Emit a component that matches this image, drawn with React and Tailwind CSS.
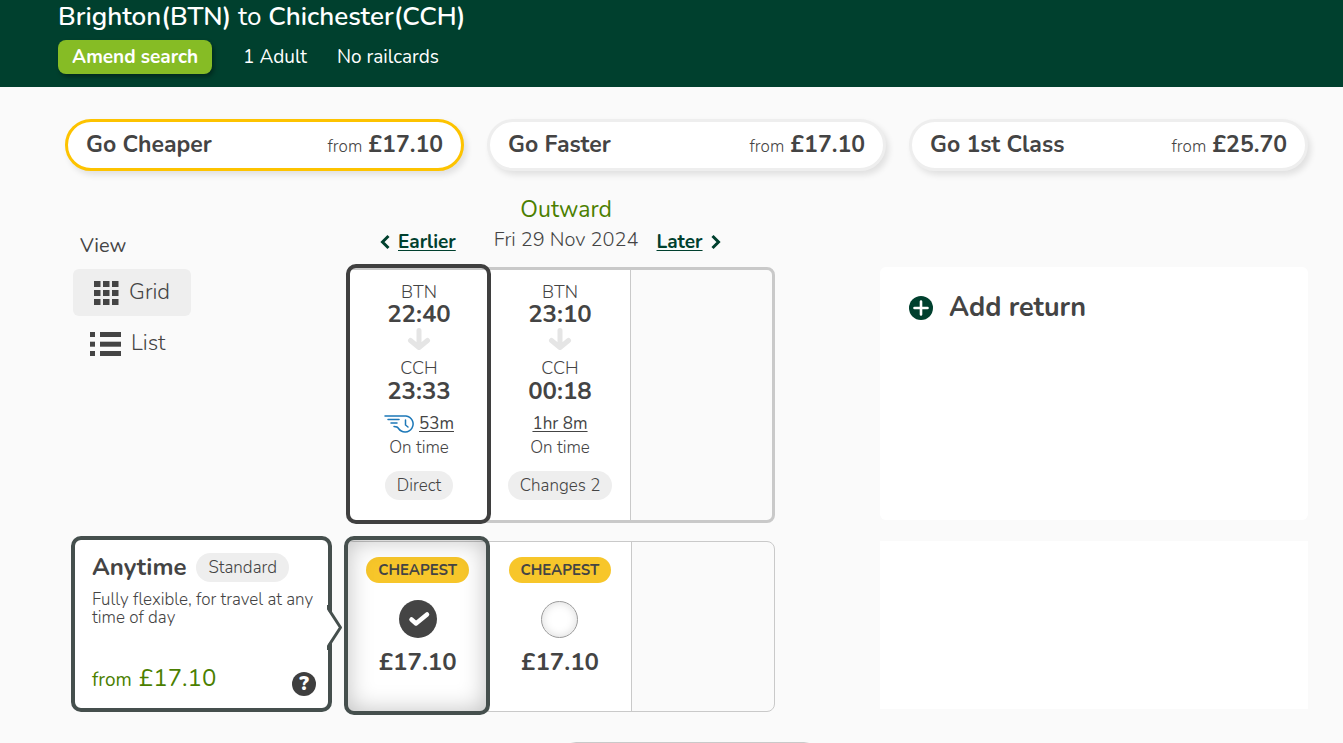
import React, { useState } from "react";

const offers = [
  { id: "cheaper", name: "Go Cheaper", price: "£17.10" },
  { id: "faster", name: "Go Faster", price: "£17.10" },
  { id: "first", name: "Go 1st Class", price: "£25.70" },
];

const journeys = [
  {
    id: "2240",
    departs: "22:40",
    arrives: "23:33",
    duration: "53m",
    fastest: true,
    changes: "Direct",
    price: "£17.10",
  },
  {
    id: "2310",
    departs: "23:10",
    arrives: "00:18",
    duration: "1hr 8m",
    fastest: false,
    changes: "Changes 2",
    price: "£17.10",
  },
];

const GridIcon = () => (
  <svg width="25" height="24" viewBox="0 0 25 24" fill="currentColor" aria-hidden="true">
    {[0, 9, 18].map((y) =>
      [0, 9, 18].map((x) => <rect key={`${x}-${y}`} x={x} y={y} width="6.5" height="6" />)
    )}
  </svg>
);

const ListIcon = () => (
  <svg width="31" height="24" viewBox="0 0 31 24" fill="currentColor" aria-hidden="true">
    {[0, 9.7, 19].map((y) => (
      <g key={y}>
        <rect x="0" y={y} width="5" height="5" />
        <rect x="10" y={y} width="21" height="5" />
      </g>
    ))}
  </svg>
);

const Chevron = ({ d }) => (
  <svg width="10" height="16" viewBox="0 0 10 16" fill="none" stroke="currentColor" strokeWidth="3" aria-hidden="true">
    <path d={d} />
  </svg>
);

const DownArrow = () => (
  <svg
    width="24"
    height="24"
    viewBox="0 0 24 24"
    fill="none"
    stroke="#e5e5e5"
    strokeWidth="5"
    strokeLinecap="round"
    strokeLinejoin="round"
    aria-hidden="true"
  >
    <path d="M12 3.5V20M3.5 13.5L12 20.5L20.5 13.5" />
  </svg>
);

const FastIcon = () => (
  <svg
    width="31"
    height="18"
    viewBox="0 0 31 18"
    fill="none"
    stroke="#1d78b8"
    strokeWidth="1.5"
    strokeLinecap="round"
    aria-hidden="true"
  >
    <path d="M1 1H22A8 8 0 1 1 14.5 13.5Q13.5 11.5 10 11.5" />
    <path d="M4 4.5H15M7 8H13" />
    <path d="M21.5 5V10L24 12" />
  </svg>
);

// thick frame drawn over the column that is currently picked
const SelectedFrame = ({ className }) => (
  <span
    className={`pointer-events-none absolute -top-1.5 -right-0.5 -bottom-1 -left-[3px] z-10 rounded-[10px] border-4 ${className}`}
  />
);

const JourneyCell = ({ journey, selected }) => (
  <div className="relative flex flex-col items-center border-r border-[#c9c9c9] bg-white pt-[11px] pb-5">
    <span className="text-lg leading-[22px] font-light">BTN</span>
    <span className="text-2xl leading-[22px] font-bold">{journey.departs}</span>
    <span className="mt-0.5">
      <DownArrow />
    </span>
    <span className="mt-1.5 text-lg leading-[22px] font-light">CCH</span>
    <span className="text-2xl leading-6 font-bold">{journey.arrives}</span>
    <div className="mt-[9px] flex h-6 items-center gap-1">
      {journey.fastest && <FastIcon />}
      <button type="button" className="text-[17px] leading-6 underline underline-offset-2">
        {journey.duration}
      </button>
    </div>
    <span className="text-[17px] leading-6 font-light">On time</span>
    <span className="mt-[11px] rounded-full bg-[#eee] px-3 text-[17px] leading-[29px] font-light">
      {journey.changes}
    </span>
    {selected && <SelectedFrame className="border-[#3f3f3f]" />}
  </div>
);

const FareCell = ({ journey, selected, onSelect }) => (
  <label className="relative flex cursor-pointer flex-col items-center border-r border-[#c9c9c9] bg-white pt-[15px] pb-[33px]">
    <span className="rounded-full bg-[#f7c62a] px-3 text-[15px] leading-[26px] font-bold">
      CHEAPEST
    </span>
    <span className="relative mt-[17px] flex h-[38px] w-[38px] items-center justify-center">
      <input
        type="radio"
        name="fare"
        checked={selected}
        onChange={onSelect}
        className="h-[37px] w-[37px] appearance-none rounded-full border border-[#999] bg-white shadow-[inset_0_0_10px_rgba(0,0,0,0.15)] checked:h-[38px] checked:w-[38px] checked:border-0 checked:bg-[#444] checked:shadow-none"
      />
      {selected && (
        <svg
          className="pointer-events-none absolute"
          width="38"
          height="38"
          viewBox="0 0 38 38"
          fill="none"
          stroke="#fff"
          strokeWidth="4.5"
          strokeLinecap="round"
          strokeLinejoin="round"
          aria-hidden="true"
        >
          <path d="M12.5 19.5L17 23.5L28 14.5" />
        </svg>
      )}
    </span>
    <span className="mt-2.5 text-2xl leading-7 font-bold">{journey.price}</span>
    {selected && (
      <SelectedFrame className="border-[#454f4d] shadow-[inset_0_0_24px_rgba(0,0,0,0.25)]" />
    )}
  </label>
);

const App = () => {
  const [offer, setOffer] = useState("cheaper");
  const [view, setView] = useState("grid");
  const [picked, setPicked] = useState("2240");

  return (
    <div className="min-h-screen bg-[#fafafa] font-['Nunito','Lato',sans-serif] text-[#444]">
      {/* Search summary */}
      <header className="bg-[#00402e] px-[58px] pb-[13px] text-white">
        <h1 className="text-[26px] leading-[34px]">
          <b className="font-semibold">Brighton(BTN)</b> to{" "}
          <b className="font-semibold">Chichester(CCH)</b>
        </h1>
        <div className="mt-1.5 flex items-center text-[19px]">
          <button
            type="button"
            className="h-[34px] rounded-lg bg-[#86bc25] px-3.5 font-bold shadow-[2px_3px_4px_rgba(0,0,0,0.35)]"
          >
            Amend search
          </button>
          <span className="ml-[31px]">1 Adult</span>
          <span className="ml-[30px]">No railcards</span>
        </div>
      </header>

      <main className="pt-8 pr-[35px]">
        {/* Offers */}
        <div className="grid grid-cols-3 gap-[23px] pl-[65px]">
          {offers.map((item) => (
            <button
              key={item.id}
              type="button"
              onClick={() => setOffer(item.id)}
              className={`flex h-[52px] items-center justify-between rounded-full border-3 bg-white px-[18px] shadow-[3px_4px_6px_rgba(0,0,0,0.1)] ${
                offer === item.id ? "border-[#fdc300]" : "border-[#eee]"
              }`}
            >
              <span className="text-[23px] font-bold">{item.name}</span>
              <span className="flex items-baseline gap-1.5">
                <span className="text-[17px] font-light">from</span>
                <b className="text-[23px]">{item.price}</b>
              </span>
            </button>
          ))}
        </div>

        {/* Timetable */}
        <div className="mt-6 grid grid-cols-[275px_429px_1fr] pl-[71px]">
          <div className="pt-[38px]">
            <h2 className="pl-[9px] text-[20px] leading-[26px]">View</h2>
            <div className="mt-2.5 ml-0.5 flex flex-col items-start gap-1 text-[22px] font-light">
              <button
                type="button"
                onClick={() => setView("grid")}
                className={`flex h-[47px] w-[118px] items-center gap-[10px] rounded-md pl-[21px] ${
                  view === "grid" ? "bg-[#eee]" : ""
                }`}
              >
                <GridIcon />
                Grid
              </button>
              <button
                type="button"
                onClick={() => setView("list")}
                className={`flex h-[47px] w-[118px] items-center gap-[10px] rounded-md pl-[17px] ${
                  view === "list" ? "bg-[#eee]" : ""
                }`}
              >
                <ListIcon />
                List
              </button>
            </div>
          </div>

          <div>
            <div className="flex items-end pl-[34px]">
              <a href="#earlier" className="flex items-center gap-2 text-[19px] leading-[26px] font-bold text-[#00402e]">
                <Chevron d="M8.5 2L2.5 8L8.5 14" />
                <span className="underline underline-offset-2">Earlier</span>
              </a>
              <div className="ml-[38px] text-center">
                <h2 className="text-[23px] leading-[30px] text-[#4b7f00]">Outward</h2>
                <p className="text-[20px] leading-[30px] font-light">Fri 29 Nov 2024</p>
              </div>
              <a href="#later" className="ml-[18px] flex items-center gap-2 text-[19px] leading-[26px] font-bold text-[#00402e]">
                <span className="underline underline-offset-2">Later</span>
                <Chevron d="M1.5 2L7.5 8L1.5 14" />
              </a>
            </div>
            <div className="mt-3 grid grid-cols-3 rounded-lg border-3 border-[#c9c9c9]">
              {journeys.map((journey) => (
                <JourneyCell key={journey.id} journey={journey} selected={picked === journey.id} />
              ))}
            </div>
          </div>

          <div className="pt-[72px] pb-[3px] pl-[105px]">
            <div className="h-full rounded-md bg-white px-[29px] pt-[23px]">
              <button type="button" className="flex items-center gap-4 text-[27px] leading-9 font-bold">
                <svg width="24" height="24" viewBox="0 0 24 24" aria-hidden="true">
                  <circle cx="12" cy="12" r="12" fill="#00402e" />
                  <path d="M12 5.5V18.5M5.5 12H18.5" stroke="#fff" strokeWidth="2.6" strokeLinecap="round" />
                </svg>
                Add return
              </button>
            </div>
          </div>
        </div>

        {/* Fares */}
        <div className="mt-[13px] grid grid-cols-[275px_429px_1fr] pl-[71px]">
          <div className="relative flex h-44 w-[261px] flex-col rounded-[10px] border-4 border-[#454f4d] bg-white pt-[13px] pr-3 pb-3.5 pl-[17px]">
            <div className="flex items-center gap-[10px]">
              <h3 className="text-2xl leading-[29px] font-bold">Anytime</h3>
              <span className="rounded-full bg-[#eee] px-3 text-[17px] leading-[29px] font-light">
                Standard
              </span>
            </div>
            <p className="mt-[9px] text-[17px] leading-[18px] font-light">
              Fully flexible, for travel at any time of day
            </p>
            <p className="mt-auto flex items-baseline gap-[7px] text-[#4b7f00]">
              <span className="text-[19px]">from</span>
              <span className="text-2xl leading-[30px]">£17.10</span>
            </p>
            <button
              type="button"
              aria-label="Fare details"
              className="absolute right-3 bottom-3 h-6 w-6 rounded-full bg-[#3f3f3f] text-xl leading-6 font-black text-white"
            >
              ?
            </button>
            <svg className="absolute top-[65px] -right-[15px]" width="19" height="45" viewBox="0 0 19 45" aria-hidden="true">
              <path d="M0 0L16.5 22.5L0 45Z" fill="#fff" />
              <path d="M4.5 0V4L16.5 22.5L4.5 41V45" fill="none" stroke="#454f4d" strokeWidth="3" strokeLinejoin="round" />
            </svg>
          </div>

          <div className="mt-[5px] grid grid-cols-3 rounded-lg border border-[#c9c9c9]">
            {journeys.map((journey) => (
              <FareCell
                key={journey.id}
                journey={journey}
                selected={picked === journey.id}
                onSelect={() => setPicked(journey.id)}
              />
            ))}
          </div>

          <div className="pt-[5px] pb-[3px] pl-[105px]">
            <div className="h-full bg-white" />
          </div>
        </div>

        {/* Top edge of the next panel */}
        <div className="mt-[30px] h-0.5 overflow-hidden pl-[71px]">
          <div className="mx-auto h-10 w-64 rounded-[14px] border border-[#c9c9c9]" />
        </div>
      </main>
    </div>
  );
};

export default App;
